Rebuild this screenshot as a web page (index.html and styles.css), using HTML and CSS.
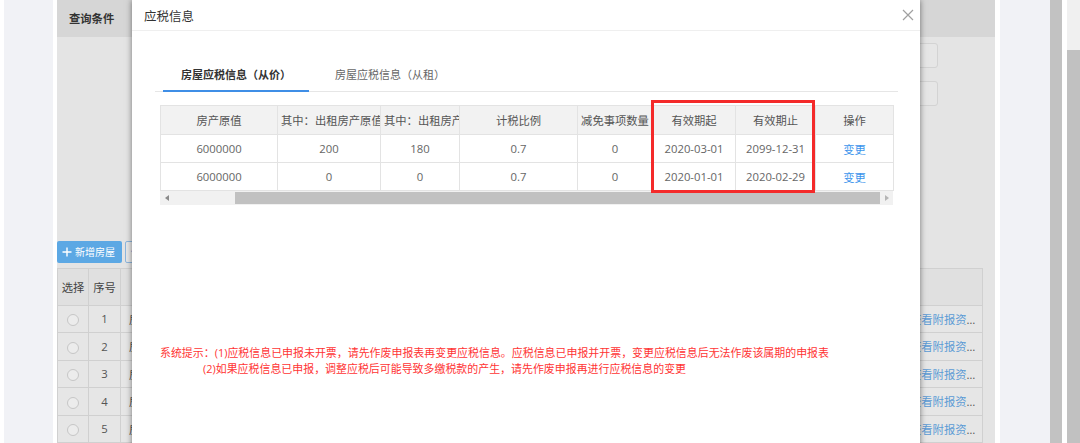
FILE: index.html
```html
<!DOCTYPE html>
<html lang="zh-CN">
<head>
  <meta charset="UTF-8" />
  <title>应税信息</title>
  <link rel="stylesheet" href="styles.css">
</head>
<body>
  <div class="page">
    <div class="side-left"></div>
    <div class="panel">
      <div class="panel-head">查询条件</div>
      <div class="query">
        <div class="field"></div>
        <div class="field"></div>
      </div>
      <div class="toolbar">
        <button class="btn btn-primary">
          <svg width="10" height="10" viewBox="0 0 10 10"><path d="M5 0.5v9M0.5 5h9" stroke="#fff" stroke-width="1.4"/></svg>
          <span>新增房屋</span>
        </button>
        <button class="btn btn-plain">修改房屋</button>
      </div>
      <table class="house-table">
        <colgroup><col class="c-sel"><col class="c-no"><col><col class="c-op"></colgroup>
        <thead>
          <tr><th>选择</th><th>序号</th><th>房屋坐落</th><th></th></tr>
        </thead>
        <tbody>
          <tr><td><span class="radio"></span></td><td>1</td><td class="addr">房屋坐落地址</td><td class="op"><a>查看附报资料</a></td></tr>
          <tr><td><span class="radio"></span></td><td>2</td><td class="addr">房屋坐落地址</td><td class="op"><a>查看附报资料</a></td></tr>
          <tr><td><span class="radio"></span></td><td>3</td><td class="addr">房屋坐落地址</td><td class="op"><a>查看附报资料</a></td></tr>
          <tr><td><span class="radio"></span></td><td>4</td><td class="addr">房屋坐落地址</td><td class="op"><a>查看附报资料</a></td></tr>
          <tr><td><span class="radio"></span></td><td>5</td><td class="addr">房屋坐落地址</td><td class="op"><a>查看附报资料</a></td></tr>
        </tbody>
      </table>
    </div>
    <div class="side-right"></div>
    <div class="inner-bar"></div>
    <div class="page-scroll"><div class="thumb"></div></div>
  </div>

  <div class="modal">
    <div class="modal-head">
      <span class="modal-title">应税信息</span>
      <svg class="modal-close" width="12" height="12" viewBox="0 0 12 12"><path d="M1 1l10 10M11 1L1 11" stroke="#a0a0a0" stroke-width="1.2"/></svg>
    </div>
    <div class="modal-body">
      <div class="tabs">
        <div class="tab active">房屋应税信息（从价）</div>
        <div class="tab">房屋应税信息（从租）</div>
      </div>
      <div class="grid-wrap">
        <table class="tax-table">
          <colgroup>
            <col style="width:117px"><col style="width:103px"><col style="width:79px"><col style="width:118px">
            <col style="width:75px"><col style="width:83px"><col style="width:80px"><col style="width:78px">
          </colgroup>
          <thead>
            <tr>
              <th>房产原值</th><th>其中：出租房产原值</th><th>其中：出租房产面积</th><th>计税比例</th>
              <th>减免事项数量</th><th>有效期起</th><th>有效期止</th><th>操作</th>
            </tr>
          </thead>
          <tbody>
            <tr><td>6000000</td><td>200</td><td>180</td><td>0.7</td><td>0</td><td>2020-03-01</td><td>2099-12-31</td><td><a class="link">变更</a></td></tr>
            <tr><td>6000000</td><td>0</td><td>0</td><td>0.7</td><td>0</td><td>2020-01-01</td><td>2020-02-29</td><td><a class="link">变更</a></td></tr>
          </tbody>
        </table>
        <div class="hscroll">
          <span class="arrow arrow-left"></span>
          <span class="track-gap"></span>
          <span class="scroll-thumb"></span>
          <span class="arrow arrow-right"></span>
        </div>
        <div class="mark"></div>
      </div>
      <div class="hint">
        <p>系统提示：(1)应税信息已申报未开票，请先作废申报表再变更应税信息。应税信息已申报并开票，变更应税信息后无法作废该属期的申报表</p>
        <p class="indent">(2)如果应税信息已申报，调整应税后可能导致多缴税款的产生，请先作废申报再进行应税信息的变更</p>
      </div>
    </div>
  </div>
</body>
</html>
```

FILE: styles.css
```css
* {
  box-sizing: border-box;
}

body {
  margin: 0;
  width: 1080px;
  height: 443px;
  overflow: hidden;
  position: relative;
  background: #ffffff;
  font-family: "Open Sans", "Noto Sans CJK SC", sans-serif;
  font-size: 11.3px;
  color: #555;
}

/* background page */
.page {
  display: flex;
  height: 443px;
}

.side-left {
  width: 49px;
  margin: 0 4px;
  background: #f1f2f6;
}

.panel {
  width: 938px;
  background: #e4e4e4;
  display: flex;
  flex-direction: column;
}

.panel-head {
  height: 37px;
  line-height: 37px;
  padding-left: 12px;
  background: #d6d6d6;
  color: #333;
  font-weight: bold;
}

.query {
  height: 204px;
  display: flex;
  flex-direction: column;
  align-items: flex-end;
  gap: 13px;
  padding: 6px 57px 0 0;
}

.field {
  width: 220px;
  height: 25px;
  border: 1px solid #d3d3d3;
  border-radius: 3px;
  background: #e6e6e6;
}

.toolbar {
  display: flex;
  gap: 3px;
  height: 22px;
}

.btn {
  height: 22px;
  border-radius: 2px;
  font-family: inherit;
  font-size: 10px;
  display: flex;
  align-items: center;
  padding: 0 5px;
  white-space: nowrap;
}

.btn-primary {
  width: 65px;
  border: none;
  background: #5ca8e4;
  color: #fff;
  gap: 3px;
}

.btn-plain {
  border: 1px solid #8db6dd;
  background: #e8e8e8;
  color: #5b9bd5;
}

.house-table {
  margin-top: 5px;
  width: 926px;
  border-collapse: collapse;
  table-layout: fixed;
}

.house-table .c-sel { width: 31px; }
.house-table .c-no { width: 32px; }
.house-table .c-op { width: 75px; }

.house-table th {
  height: 37px;
  background: #e0e0e0;
  border: 1px solid #d0d0d0;
  font-weight: normal;
  color: #444;
  padding: 0;
}

.house-table td {
  height: 27.5px;
  background: #e6e6e6;
  border: 1px solid #d0d0d0;
  text-align: center;
  color: #555;
  padding: 0;
  white-space: nowrap;
  overflow: hidden;
}

.house-table td.addr {
  text-align: left;
  padding-left: 8px;
}

.house-table td.op {
  text-align: left;
  padding: 0 6px 0 2px;
  text-overflow: ellipsis;
}

.house-table a {
  color: #5b9bd5;
}

.radio {
  display: inline-block;
  width: 12px;
  height: 12px;
  border: 1px solid #c6c6c6;
  border-radius: 50%;
  background: #ececec;
  vertical-align: middle;
}

.side-right {
  width: 50px;
  margin-left: 5px;
  background: #f1f2f6;
}

.inner-bar {
  width: 12px;
  background: #c2c2c2;
}

.page-scroll {
  width: 13px;
  margin-left: 5px;
  padding-top: 50px;
  background: #f0f0f0;
}

.page-scroll .thumb {
  height: 100%;
  background: #c1c1c1;
}

/* modal */
.modal {
  position: absolute;
  left: 132px;
  top: 0;
  width: 788px;
  height: 460px;
  background: #fff;
  box-shadow: 0 0 6px rgba(0, 0, 0, 0.5);
}

.modal-head {
  height: 31px;
  border-bottom: 1px solid #efefef;
  display: flex;
  align-items: center;
  justify-content: space-between;
  padding: 0 6px 0 12px;
}

.modal-title {
  font-size: 12.5px;
  color: #333;
}

.modal-body {
  padding: 28px 22px 0 23px;
}

.tabs {
  display: flex;
  border-bottom: 1px solid #e6e6e6;
}

.tab {
  margin-left: 8px;
  padding: 0 18px;
  line-height: 31px;
  font-size: 11px;
  border-bottom: 2px solid transparent;
  margin-bottom: -1px;
  color: #666;
}

.tab.active {
  color: #333;
  font-weight: bold;
  border-bottom-color: #3f8ee6;
}

.grid-wrap {
  position: relative;
  margin: 13px 5px 0;
}

.tax-table {
  width: 733px;
  border-collapse: collapse;
  table-layout: fixed;
}

.tax-table th {
  height: 29px;
  background: #f2f2f2;
  border: 1px solid #e3e3e3;
  font-weight: normal;
  color: #555;
  padding: 0 3px;
  white-space: nowrap;
  overflow: hidden;
}

.tax-table td {
  height: 28px;
  border: 1px solid #e3e3e3;
  text-align: center;
  color: #666;
  padding: 0 3px;
  white-space: nowrap;
  overflow: hidden;
}

.tax-table .link {
  color: #3d95ec;
}

.hscroll {
  display: flex;
  height: 14px;
  background: #f1f1f1;
  align-items: stretch;
}

.arrow {
  width: 13px;
  display: flex;
  align-items: center;
  justify-content: center;
}

.arrow::after {
  content: "";
  border: 3px solid transparent;
}

.arrow-left::after {
  border-right: 4px solid #8a8a8a;
  border-left: none;
}

.arrow-right::after {
  border-left: 4px solid #b5b5b5;
  border-right: none;
}

.track-gap {
  width: 62px;
}

.scroll-thumb {
  flex: 1;
  margin: 1px 0;
  background: #c1c1c1;
}

.mark {
  position: absolute;
  left: 491px;
  top: -5px;
  width: 164px;
  height: 93px;
  border: 3px solid #f42a2a;
}

.hint {
  margin-top: 140px;
  padding-left: 5px;
  color: #ff3434;
  font-size: 10.95px;
  white-space: nowrap;
}

.hint p {
  margin: 0;
  line-height: 16px;
}

.hint .indent {
  padding-left: 43px;
}
```
